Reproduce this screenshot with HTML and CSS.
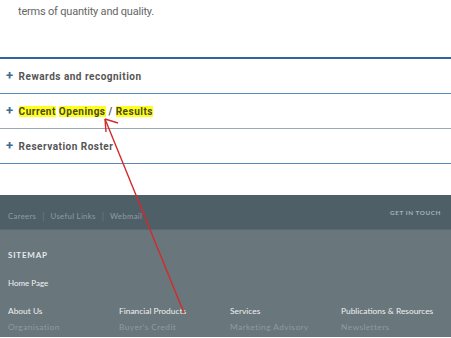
FILE: index.html
```html
<!DOCTYPE html>
<html>
<head>
	<title>Careers</title>
	<link rel="stylesheet" href="styles.css">
</head>
<body>

	<div class="intro">
		<p>terms of quantity and quality.</p>
	</div>

	<div class="accordion">
		<div class="acc-item"><span class="plus">+</span> Rewards and recognition</div>
		<div class="acc-item"><span class="plus">+</span> <mark>Current</mark> <mark>Openings</mark> / <mark>Results</mark></div>
		<div class="acc-item"><span class="plus">+</span> Reservation Roster</div>
	</div>

	<div class="footer">
		<div class="footer-top">
			<div class="quick-links">
				<a href="#">Careers</a><span class="sep">|</span><a href="#">Useful Links</a><span class="sep">|</span><a href="#">Webmail</a>
			</div>
			<a href="#" class="touch">GET IN TOUCH</a>
		</div>
		<div class="sitemap">
			<h4>SITEMAP</h4>
			<a href="#" class="home">Home Page</a>
			<div class="cols">
				<div class="col">
					<div class="col-title">About Us</div>
					<div class="col-link">Organisation</div>
				</div>
				<div class="col">
					<div class="col-title">Financial Products</div>
					<div class="col-link">Buyer's Credit</div>
				</div>
				<div class="col">
					<div class="col-title">Services</div>
					<div class="col-link">Marketing Advisory</div>
				</div>
				<div class="col">
					<div class="col-title">Publications &amp; Resources</div>
					<div class="col-link">Newsletters</div>
				</div>
			</div>
		</div>
	</div>

	<svg class="arrow" width="451" height="338" viewBox="0 0 451 338">
		<line x1="184" y1="313" x2="105" y2="119" stroke="#d42a2a" stroke-width="1.4"/>
		<line x1="105" y1="119" x2="118" y2="123" stroke="#d42a2a" stroke-width="1.4"/>
		<line x1="105" y1="119" x2="106" y2="132" stroke="#d42a2a" stroke-width="1.4"/>
	</svg>

</body>
</html>
```

FILE: styles.css
```css
body {
	margin: 0;
	background: #FFFFFF;
	font-family: "Roboto", "Liberation Sans", sans-serif;
	position: relative;
	overflow: hidden;
}

.intro {
	height: 57px;
	padding: 0 18px;
}

.intro p {
	margin: 0;
	padding-top: 5px;
	color: #666666;
	font-size: 11px;
	letter-spacing: -0.2px;
}

.accordion {
	border-top: 2px solid #2f64a0;
}

.acc-item {
	height: 34px;
	line-height: 33px;
	border-bottom: 1px solid #5a86b8;
	padding-left: 6px;
	color: #555555;
	font-size: 10px;
	font-weight: bold;
	letter-spacing: 0.5px;
}

.acc-item:nth-child(2) {
	border-bottom-color: #9aa8b6;
}

.plus {
	color: #3f6a96;
	font-size: 13px;
	margin-right: 2px;
}

mark {
	background: #ffff1a;
	color: #4a4a2a;
}

.footer {
	margin-top: 31px;
	background: #69767c;
	font-family: "Lato", "Liberation Sans", sans-serif;
	height: 142px;
}

.footer-top {
	height: 34px;
	background: #4f5f68;
	border-bottom: 1px solid #5b6870;
	display: flex;
	align-items: center;
	justify-content: space-between;
	padding: 0 10px 0 8px;
}

.quick-links a {
	color: #8e9ca3;
	font-size: 7.8px;
	text-decoration: none;
	letter-spacing: 0.3px;
}

.sep {
	color: #6c7b83;
	font-size: 9px;
	margin: 0 6px;
}

.touch {
	color: #a7b3b9;
	font-size: 6.3px;
	font-weight: bold;
	letter-spacing: 0.6px;
	text-decoration: none;
}

.sitemap {
	padding: 20px 8px 0 8px;
}

.sitemap h4 {
	margin: 0;
	color: #e6eaec;
	font-size: 8px;
	letter-spacing: 0.8px;
	font-weight: bold;
}

.home {
	display: block;
	margin-top: 18px;
	color: #f2f2f2;
	font-size: 8px;
	text-decoration: none;
}

.cols {
	display: grid;
	grid-template-columns: repeat(4, 111px);
	margin-top: 18px;
}

.col-title {
	color: #f0f0f0;
	font-size: 8.4px;
}

.col-link {
	color: #8f9ba0;
	font-size: 8.4px;
	margin-top: 6px;
	letter-spacing: 0.4px;
}

.arrow {
	position: absolute;
	left: 0;
	top: 0;
}
```
